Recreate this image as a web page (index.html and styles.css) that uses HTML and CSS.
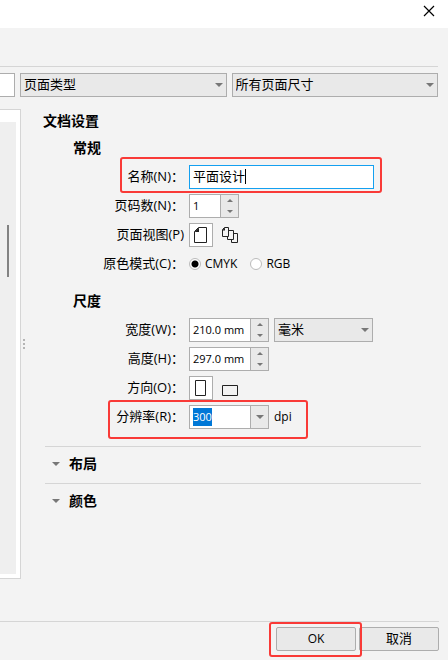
FILE: index.html
```
<!DOCTYPE html>
<html lang="zh-CN">
<head>
    <meta charset="UTF-8">
    <meta name="viewport" content="width=device-width, initial-scale=1.0">
    <title>创建新文档</title>
    <link rel="stylesheet" href="styles.css">
</head>
<body>

    <header class="titlebar">
        <button type="button" class="close-btn" aria-label="关闭">
            <svg width="12" height="12" viewBox="0 0 12 12"><path d="M1 1L11 11M11 1L1 11" stroke="#000" stroke-width="1.2" fill="none"/></svg>
        </button>
    </header>

    <div class="toolbar">
        <input type="text" class="search" aria-label="搜索">
        <div class="select-box">
            <select aria-label="页面类型"><option>页面类型</option></select>
        </div>
        <div class="select-box">
            <select aria-label="页面尺寸"><option>所有页面尺寸</option></select>
        </div>
    </div>

    <main class="content">
        <div class="presets"><div class="presets-list"><div class="thumb"></div></div></div>
        <div class="splitter"><i></i><i></i><i></i></div>

        <form class="settings">
            <h1>文档设置</h1>

            <h2>常规</h2>
            <div class="row row-name">
                <label for="name">名称(N)：</label>
                <div class="name-box">
                    <input type="text" id="name" value="平面设计">
                    <span class="caret"></span>
                </div>
                <span class="mark"></span>
            </div>
            <div class="row">
                <label for="pages">页码数(N)：</label>
                <div class="spin small">
                    <input type="text" id="pages" value="1">
                    <div class="steps">
                        <button type="button" class="up" aria-label="增加"></button>
                        <button type="button" class="down" aria-label="减少"></button>
                    </div>
                </div>
            </div>
            <div class="row">
                <span class="label" id="view-label">页面视图(P)</span>
                <div class="icons" role="group" aria-labelledby="view-label">
                    <button type="button" class="icon-btn active" aria-label="单页">
                        <svg width="14" height="16" viewBox="0 0 14 16"><path d="M4.5 .5H12.5V15.5H.5V4.5Z" fill="none" stroke="#222"/><path d="M5 .5V5H.5Z" fill="#222"/></svg>
                    </button>
                    <button type="button" class="icon-btn" aria-label="多页">
                        <svg width="18" height="16" viewBox="0 0 18 16"><g fill="#f3f3f3" stroke="#222"><path d="M12.5 6.5H16.5V15.5H10.5V8.5Z"/><path d="M7.5 3.5H12.5V12.5H6.5V5.5Z"/><path d="M3.5 .5H7.5V9.5H1.5V2.5Z"/></g><path d="M4 .5V3.5H1Z" fill="#222"/></svg>
                    </button>
                </div>
            </div>
            <div class="row">
                <span class="label" id="mode-label">原色模式(C)：</span>
                <div class="radios" role="radiogroup" aria-labelledby="mode-label">
                    <label class="radio"><input type="radio" name="mode" checked>CMYK</label>
                    <label class="radio"><input type="radio" name="mode">RGB</label>
                </div>
            </div>

            <h2 class="second">尺度</h2>
            <div class="row">
                <label for="width">宽度(W)：</label>
                <div class="spin">
                    <input type="text" id="width" value="210.0 mm">
                    <div class="steps">
                        <button type="button" class="up" aria-label="增加"></button>
                        <button type="button" class="down" aria-label="减少"></button>
                    </div>
                </div>
                <div class="select-box unit">
                    <select aria-label="单位"><option>毫米</option></select>
                </div>
            </div>
            <div class="row">
                <label for="height">高度(H)：</label>
                <div class="spin">
                    <input type="text" id="height" value="297.0 mm">
                    <div class="steps">
                        <button type="button" class="up" aria-label="增加"></button>
                        <button type="button" class="down" aria-label="减少"></button>
                    </div>
                </div>
            </div>
            <div class="row">
                <span class="label" id="dir-label">方向(O)：</span>
                <div class="icons" role="group" aria-labelledby="dir-label">
                    <button type="button" class="icon-btn active" aria-label="纵向">
                        <svg width="12" height="16" viewBox="0 0 12 16"><path d="M.5 .5H10.5V15.5H.5Z" fill="none" stroke="#222"/></svg>
                    </button>
                    <button type="button" class="icon-btn" aria-label="横向">
                        <svg width="18" height="16" viewBox="0 0 18 16"><path d="M1.5 5.5H16.5V15.5H1.5Z" fill="none" stroke="#222"/></svg>
                    </button>
                </div>
            </div>
            <div class="row row-dpi">
                <label for="dpi">分辨率(R)：</label>
                <div class="spin">
                    <input type="text" id="dpi" value="300">
                    <div class="steps">
                        <button type="button" class="down big" aria-label="选择分辨率"></button>
                    </div>
                </div>
                <span class="unit-text">dpi</span>
                <span class="mark"></span>
            </div>

            <div class="sections">
                <button type="button" class="section-btn">布局</button>
                <button type="button" class="section-btn">颜色</button>
            </div>
        </form>
    </main>

    <footer class="footer">
        <div class="ok-box">
            <button type="button" class="btn latin">OK</button>
            <span class="mark"></span>
        </div>
        <button type="button" class="btn">取消</button>
    </footer>

    <script>
        document.getElementById("dpi").select();
    </script>

</body>
</html>
```
FILE: styles.css
```
* {
    box-sizing: border-box;
}
body {
    margin: 0;
    min-height: 100vh;
    display: flex;
    flex-direction: column;
    background: #f3f3f3;
    color: #000;
    font-family: "Open Sans", "Noto Sans CJK SC", sans-serif;
    font-size: 13px;
    line-height: 18px;
}
input, button, select {
    font: inherit;
    color: inherit;
    margin: 0;
    padding: 0;
    border: none;
    border-radius: 0;
    outline: none;
    background: none;
    min-width: 0;
}
svg {
    display: block;
}
.titlebar {
    height: 28px;
    background: #fff;
    display: flex;
    justify-content: flex-end;
    padding: 5px 13px 0 0;
}
.close-btn {
    width: 12px;
    height: 12px;
}
.toolbar {
    display: flex;
    gap: 5px;
    margin: 38px 10px 0 0;
    padding-top: 6px;
    border-top: 1px solid #d5d5d5;
}
.search {
    width: 15px;
    height: 24px;
    background: #fff;
    border: 1px solid #adadad;
    border-left: none;
}
.select-box {
    position: relative;
    flex: 1;
    height: 24px;
}
.select-box select {
    appearance: none;
    display: block;
    width: 100%;
    height: 24px;
    padding: 0 16px 3px 3px;
    background: #e9e9e9;
    border: 1px solid #adadad;
}
.select-box::after {
    content: "";
    position: absolute;
    right: 4px;
    top: 10px;
    border: 4px solid transparent;
    border-top-color: #777;
    border-bottom: none;
    pointer-events: none;
}
.content {
    flex: 1;
    display: flex;
    margin-top: 12px;
}
.presets {
    width: 21px;
    padding: 12px 4px 4px 0;
    background: #fff;
    border: 1px solid #d5d5d5;
    border-left: none;
}
.presets-list {
    height: 100%;
    padding: 103px 7px 0;
    background: #efefef;
}
.thumb {
    width: 2px;
    height: 52px;
    background: #828282;
}
.splitter {
    width: 7px;
    padding-left: 2px;
    display: flex;
    flex-direction: column;
    justify-content: center;
    gap: 2px;
}
.splitter i {
    width: 2px;
    height: 2px;
    background: #b4b4b4;
}
.settings {
    flex: 1;
    padding: 3px 27px 0 15px;
}
h1, h2 {
    margin: 0;
    font-size: 14px;
    line-height: 18px;
}
h2 {
    margin: 9px 0 8px 30px;
}
h2.second {
    margin: 16px 0 8px 30px;
}
.row {
    position: relative;
    display: flex;
    align-items: center;
    height: 24px;
    margin-bottom: 5px;
}
.row > label, .label {
    width: 141px;
    margin-right: 5px;
    padding-bottom: 2px;
    text-align: right;
    white-space: nowrap;
}
/* red frames around the fields to fill in */
.mark {
    position: absolute;
    border: 2px solid #f93a37;
    border-radius: 3px;
    pointer-events: none;
}
.row-name .mark {
    left: 77px;
    right: 39px;
    top: -8px;
    bottom: -4px;
}
.row-dpi .mark {
    left: 65px;
    width: 200px;
    top: -5px;
    bottom: -10px;
}
.name-box {
    position: relative;
    flex: 1;
    margin-right: 47px;
}
.name-box input {
    display: block;
    width: 100%;
    height: 24px;
    padding: 0 3px 3px;
    background: #fff;
    border: 1px solid #14a0f0;
}
.caret {
    position: absolute;
    left: 56px;
    top: 4px;
    width: 1px;
    height: 15px;
    background: #000;
}
.spin {
    display: flex;
    width: 80px;
    height: 24px;
    background: #fff;
    border: 1px solid #adadad;
}
.spin.small {
    width: 50px;
}
.spin input {
    flex: 1;
    padding: 0 0 1px 3px;
    font-size: 11px;
}
.spin input::selection {
    background: #0078d7;
    color: #fff;
}
.steps {
    width: 18px;
    display: flex;
    flex-direction: column;
    background: #e9e9e9;
    border-left: 1px solid #adadad;
}
.steps button {
    flex: 1;
    display: flex;
    justify-content: center;
    align-items: center;
}
.steps button::before {
    content: "";
    border: 3px solid transparent;
}
.steps .up::before {
    border-bottom-color: #777;
    border-top: none;
}
.steps .down::before {
    border-top-color: #777;
    border-bottom: none;
}
.steps .big::before {
    border-width: 4px 4px 0;
}
.icons {
    display: flex;
    gap: 5px;
}
.icon-btn {
    width: 24px;
    height: 24px;
    display: flex;
    justify-content: center;
    align-items: center;
}
.icon-btn.active {
    background: #fff;
    border: 1px solid #adadad;
}
.radios {
    display: flex;
    gap: 13px;
    font-size: 12px;
}
.radio {
    display: flex;
    align-items: center;
    gap: 4px;
}
.radio input {
    appearance: none;
    width: 12px;
    height: 12px;
    background: #fff;
    border: 1px solid #bbb;
    border-radius: 50%;
}
.radio input:checked {
    background: radial-gradient(circle, #000 3px, #fff 4px);
}
.unit {
    flex: none;
    width: 99px;
    margin-left: 5px;
}
.unit-text {
    margin-left: 5px;
    font-size: 12px;
}
.sections {
    margin: 17px 0 0 2px;
}
.section-btn {
    display: flex;
    align-items: center;
    gap: 9px;
    width: 100%;
    height: 37px;
    padding: 0 0 2px 7px;
    border-top: 1px solid #d5d5d5;
    font-size: 14px;
    font-weight: bold;
}
.section-btn::before {
    content: "";
    border: 4px solid transparent;
    border-top-color: #777;
    border-bottom: none;
}
.footer {
    display: flex;
    justify-content: flex-end;
    gap: 3px;
    margin: 42px 9px 0 0;
    padding: 5px 0 9px;
    border-top: 1px solid #d5d5d5;
}
.ok-box {
    position: relative;
}
.ok-box .mark {
    left: -7px;
    right: -6px;
    top: -5px;
    bottom: -6px;
}
.btn {
    display: block;
    width: 80px;
    height: 24px;
    padding-bottom: 2px;
    background: #e9e9e9;
    border: 1px solid #adadad;
    border-radius: 2px;
}
.btn.latin {
    padding-bottom: 0;
    font-size: 12px;
}
```
